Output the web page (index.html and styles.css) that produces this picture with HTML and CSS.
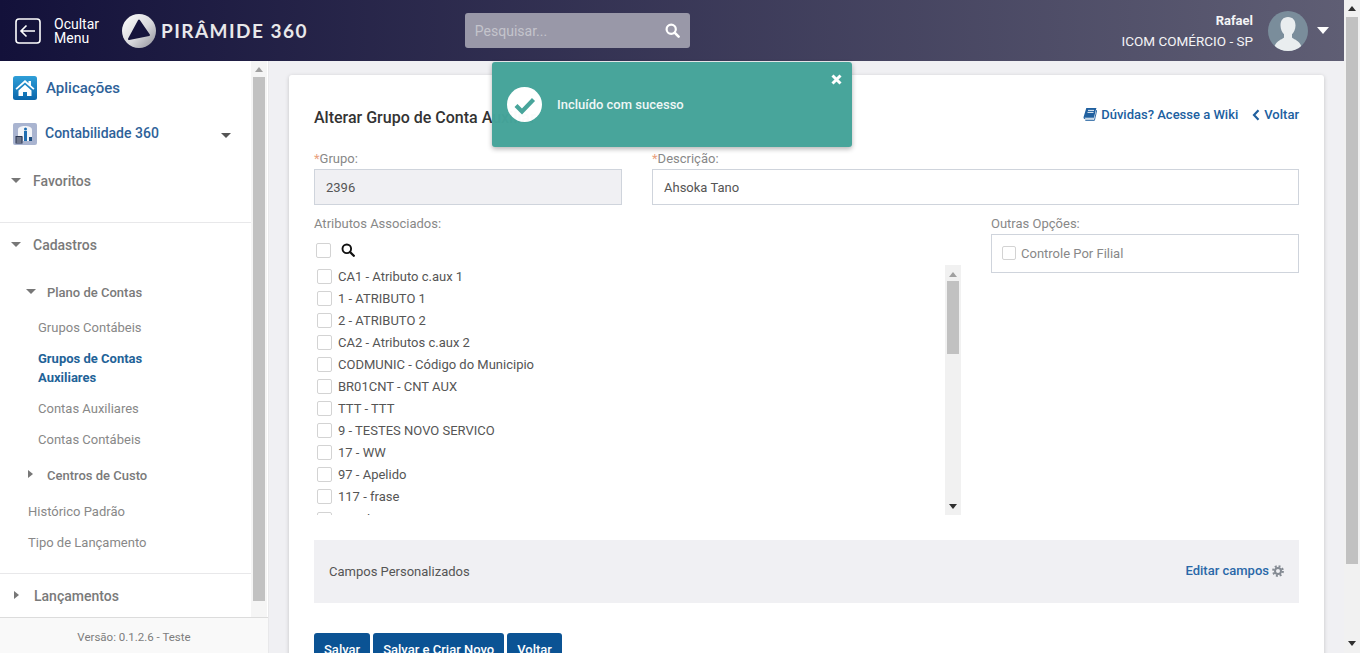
FILE: index.html
```html
<!DOCTYPE html>
<html lang="pt-BR">
<head>
<meta charset="utf-8">
<title>Alterar Grupo de Conta Auxiliar</title>
<link rel="stylesheet" href="styles.css">
</head>
<body>
<div class="window">
  <div class="page">
    <header class="topbar">
      <button class="hide-menu">
        <svg class="hide-icon" viewBox="0 0 26 26" width="26" height="26"><rect x="1" y="1" width="24" height="24" rx="3" fill="none" stroke="#fff" stroke-width="1.6"/><path d="M20 13H6M11.5 7.5 6 13l5.5 5.5" fill="none" stroke="#fff" stroke-width="1.6"/></svg>
        <span class="hide-text">Ocultar<br>Menu</span>
      </button>
      <div class="brand">
        <svg width="34" height="34" viewBox="0 0 34 34">
          <defs>
            <linearGradient id="ring" x1="0" y1="0" x2="1" y2="1"><stop offset="0" stop-color="#ffffff"/><stop offset=".55" stop-color="#d8d8dc"/><stop offset="1" stop-color="#8d8d96"/></linearGradient>
          </defs>
          <circle cx="17" cy="17" r="17" fill="url(#ring)"/>
          <path d="M17 6.5 7 25 27 21Z" fill="#16143c" stroke="#16143c" stroke-width="2" stroke-linejoin="round"/>
        </svg>
        <span class="brand-name">PIRÂMIDE 360</span>
      </div>
      <div class="search">
        <span class="search-text">Pesquisar...</span>
        <svg width="15" height="15" viewBox="0 0 15 15"><circle cx="6.2" cy="6.2" r="4.6" fill="none" stroke="#fff" stroke-width="2.2"/><path d="m9.6 9.6 4 4" stroke="#fff" stroke-width="2.6" stroke-linecap="round"/></svg>
      </div>
      <div class="user">
        <div class="user-text"><strong>Rafael</strong><span>ICOM COMÉRCIO - SP</span></div>
        <svg class="avatar" width="40" height="40" viewBox="0 0 40 40"><clipPath id="av"><circle cx="20" cy="20" r="20"/></clipPath><g clip-path="url(#av)"><rect width="40" height="40" fill="#7a8d9b"/><path d="M20 6c-5 0-7.500 3.500-7.500 8.500 0 4 1.800 7 3.500 8.800v3.200C14 29 6 29.500 6 40h28c0-10.500-8-11-10-13.500v-3.200c1.700-1.800 3.500-4.800 3.500-8.800C27.500 9.500 25 6 20 6Z" fill="#e9edef"/></g></svg>
        <span class="caret-white"></span>
      </div>
    </header>
    <div class="body">
      <aside class="sidebar">
        <div class="side-main">
          <nav class="nav">
            <a class="app app-first"><svg width="24" height="24" viewBox="0 0 24 24"><defs><linearGradient id="blue" x1="0" y1="0" x2="0" y2="1"><stop offset="0" stop-color="#2f9fd8"/><stop offset="1" stop-color="#0a66ab"/></linearGradient></defs><rect width="24" height="24" rx="2.500" fill="url(#blue)"/><path d="M12 4 2.500 12.500l1.200 1.300L12 6.500l8.300 7.300 1.200-1.300L18 9.400V5h-2.500v2.200Z" fill="#fff"/><path d="M5.500 14.500 12 8.700l6.500 5.800V20h-4.500v-4h-4v4H5.500Z" fill="#fff"/></svg><span class="app-name">Aplicações</span></a>
            <a class="app app-second"><svg width="24" height="22" viewBox="0 0 24 22"><rect width="24" height="22" rx="2" fill="#a9b4d0"/><path d="M5 14V7c0-3 3-4 7-4s7 1 7 4v11H10v-4Z" fill="#f2f4f8"/><rect x="2.500" y="13" width="7" height="7.500" fill="#2a3550"/><path d="M3.500 15h5M3.500 17h5M3.500 19h5" stroke="#d8dce6" stroke-width=".8"/><rect x="11" y="8" width="3" height="10" fill="#1f6db0"/><circle cx="12.500" cy="6" r="1.500" fill="#1f6db0"/><rect x="16" y="14" width="3" height="4" fill="#1f4f80"/></svg><span class="app-name small">Contabilidade 360</span><span class="caret caret-app"></span></a>
            <a class="group group-fav"><span class="caret"></span>Favoritos</a>
            <hr class="rule rule-a">
            <a class="group group-cad"><span class="caret"></span>Cadastros</a>
            <a class="sub sub-plano"><span class="caret"></span>Plano de Contas</a>
            <a class="leaf">Grupos Contábeis</a>
            <a class="leaf active">Grupos de Contas<br>Auxiliares</a>
            <a class="leaf">Contas Auxiliares</a>
            <a class="leaf">Contas Contábeis</a>
            <a class="sub sub-centros"><span class="caret-right"></span>Centros de Custo</a>
            <a class="leaf shallow first-shallow">Histórico Padrão</a>
            <a class="leaf shallow">Tipo de Lançamento</a>
            <hr class="rule rule-b">
            <a class="group group-lanc"><span class="caret-right"></span>Lançamentos</a>
          </nav>
          <div class="scrollbar side-scroll">
            <span class="arrow-up"></span>
            <span class="thumb"></span>
          </div>
        </div>
        <footer class="version">Versão: 0.1.2.6 - Teste</footer>
      </aside>
      <main class="content">
        <section class="card">
          <div class="card-head">
            <h1 class="title">Alterar Grupo de Conta Auxiliar</h1>
            <div class="head-links">
              <a class="link"><svg width="14" height="14" viewBox="0 0 14 14"><path d="M3.300 1H13.500l-.4 1-2.500 10.200H2.400C1 12.200.3 11.300.6 10Z" fill="#20609f"/><path d="M1.800 10.600c-.2.700.1 1.100.8 1.100h8.300l.2-.9H2.400Z" fill="#fff"/><path d="M5 3.400h6M4.500 5.400h6" stroke="#fff" stroke-width=".9"/><path d="M13.800 3 11.400 13.400H2.300" fill="none" stroke="#20609f" stroke-width=".9"/></svg>Dúvidas? Acesse a Wiki</a>
              <a class="link"><svg width="8" height="12" viewBox="0 0 8 12"><path d="M6.500 1.200 2 6l4.500 4.800" fill="none" stroke="#20609f" stroke-width="2.200"/></svg>Voltar</a>
            </div>
          </div>
          <div class="fields">
            <div class="field">
              <label class="label"><i>*</i>Grupo:</label>
              <div class="input readonly">2396</div>
            </div>
            <div class="field">
              <label class="label"><i>*</i>Descrição:</label>
              <div class="input">Ahsoka Tano</div>
            </div>
          </div>
          <div class="assoc">
            <div class="assoc-left">
              <label class="label">Atributos Associados:</label>
              <div class="list-tools">
                <span class="check"></span>
                <svg width="14" height="14" viewBox="0 0 14 14"><circle cx="5.800" cy="5.800" r="4.300" fill="none" stroke="#111" stroke-width="1.900"/><path d="m9 9 3.800 3.800" stroke="#111" stroke-width="2.300" stroke-linecap="round"/></svg>
              </div>
              <div class="list-box">
                <ul class="list">
                  <li><span class="check"></span>CA1 - Atributo c.aux 1</li>
                  <li><span class="check"></span>1 - ATRIBUTO 1</li>
                  <li><span class="check"></span>2 - ATRIBUTO 2</li>
                  <li><span class="check"></span>CA2 - Atributos c.aux 2</li>
                  <li><span class="check"></span>CODMUNIC - Código do Municipio</li>
                  <li><span class="check"></span>BR01CNT - CNT AUX</li>
                  <li><span class="check"></span>TTT - TTT</li>
                  <li><span class="check"></span>9 - TESTES NOVO SERVICO</li>
                  <li><span class="check"></span>17 - WW</li>
                  <li><span class="check"></span>97 - Apelido</li>
                  <li><span class="check"></span>117 - frase</li>
                  <li><span class="check"></span>18 - diego</li>
                </ul>
                <div class="scrollbar list-scroll">
                  <span class="arrow-up"></span>
                  <span class="thumb"></span>
                  <span class="arrow-down"></span>
                </div>
              </div>
            </div>
            <div class="assoc-right">
              <label class="label">Outras Opções:</label>
              <div class="options"><span class="check"></span>Controle Por Filial</div>
            </div>
          </div>
          <div class="custom">
            <span>Campos Personalizados</span>
            <a class="edit">Editar campos<svg width="12" height="12" viewBox="0 0 12 12"><circle cx="6" cy="6" r="4.800" fill="none" stroke="#858b93" stroke-width="2.200" stroke-dasharray="1.900 1.870"/><circle cx="6" cy="6" r="3" fill="none" stroke="#858b93" stroke-width="2"/></svg></a>
          </div>
          <div class="actions">
            <button class="btn">Salvar</button>
            <button class="btn">Salvar e Criar Novo</button>
            <button class="btn">Voltar</button>
          </div>
        </section>
      </main>
    </div>
  </div>
  <div class="scrollbar page-scroll">
    <span class="arrow-up"></span>
    <span class="thumb"></span>
    <span class="arrow-down"></span>
  </div>
</div>
<div class="toast">
  <svg width="35" height="35" viewBox="0 0 35 35"><circle cx="17.500" cy="17.500" r="17.500" fill="#fff"/><path d="m9 18.500 6 6L26.500 12.500" fill="none" stroke="#45a49a" stroke-width="4.200"/></svg>
  <span class="toast-text">Incluído com sucesso</span>
  <svg class="toast-close" width="11" height="11" viewBox="0 0 11 11"><path d="m1.500 1.500 8 8M9.500 1.500l-8 8" stroke="#fff" stroke-width="3"/></svg>
</div>
</body>
</html>
```
FILE: styles.css
```css
* { box-sizing: border-box; }
html, body { margin: 0; height: 653px; overflow: hidden; }
body { font-family: Roboto, "Liberation Sans", sans-serif; font-size: 13px; color: #444; background: #f0f0f3; }
a { text-decoration: none; }

.window { display: flex; height: 653px; }
.page { flex: 1; min-width: 0; display: flex; flex-direction: column; height: 653px; }

/* scrollbars */
.scrollbar { display: flex; flex-direction: column; align-items: center; background: #f1f1f1; flex: none; }
.thumb { display: block; background: #c1c1c1; }
.arrow-up { width: 0; height: 0; border: 4px solid transparent; border-top: 0; border-bottom: 5px solid #606060; }
.arrow-down { width: 0; height: 0; border: 4px solid transparent; border-bottom: 0; border-top: 5px solid #303030; margin-top: auto; }
.page-scroll { width: 16px; padding: 6px 0 7px; }
.page-scroll .arrow-up { margin-bottom: 6px; border-bottom-color: #303030; }
.page-scroll .thumb { width: 12px; height: 547px; }
.side-scroll { width: 16px; height: 556px; padding-top: 6px; margin-right: 1px; background: #f5f5f5; }
.side-scroll .arrow-up { border-bottom-color: #a0a0a0; margin-bottom: 5px; }
.side-scroll .thumb { width: 12px; height: 524px; }
.list-scroll { width: 16px; height: 250px; padding: 7px 0 6px; }
.list-scroll .arrow-up { border-bottom-color: #a0a0a0; margin-bottom: 4px; }
.list-scroll .thumb { width: 12px; height: 73px; }

/* topbar */
.topbar { height: 61px; flex: none; display: flex; align-items: center; background: linear-gradient(90deg, #13113a 0%, #5f5e74 100%); color: #fff; }
.hide-menu { display: flex; align-items: center; background: none; border: 0; padding: 0 0 0 15px; color: #fff; font: inherit; }
.hide-icon { display: block; }
.hide-text { margin-left: 13px; width: 68px; text-align: left; font-size: 14px; line-height: 14px; }
.brand { display: flex; align-items: center; margin-left: 0; }
.brand-name { margin-left: 5px; font-family: Lato, sans-serif; font-size: 19px; font-weight: 700; letter-spacing: 1.450px; color: #e8e8ea; white-space: nowrap; }
.search { margin-left: 157px; width: 225px; height: 35px; border-radius: 3px; background: #9998a8; display: flex; align-items: center; justify-content: space-between; padding: 0 10px; }
.search-text { color: #c4c4cc; font-size: 14px; }
.user { margin-left: auto; display: flex; align-items: center; }
.user-text { display: flex; flex-direction: column; align-items: flex-end; line-height: 20px; font-size: 13.500px; color: #f4f4f6; }
.user-text strong { font-weight: 700; font-size: 13px; }
.avatar { margin-left: 15px; }
.caret-white { width: 0; height: 0; margin: 0 15px 0 9px; border: 6px solid transparent; border-bottom: 0; border-top: 7px solid #fff; }

.body { flex: 1; display: flex; min-height: 0; }

/* sidebar */
.sidebar { width: 269px; flex: none; display: flex; flex-direction: column; background: #fff; border-right: 1px solid #e8e8ea; }
.side-main { display: flex; height: 556px; flex: none; overflow: hidden; }
.nav { flex: 1; min-width: 0; display: flex; flex-direction: column; }
.app { display: flex; align-items: center; color: #2e6299; font-weight: 500; margin-left: 13px; }
.app-first { margin-top: 15px; height: 24px; }
.app-second { margin-top: 23px; height: 22px; }
.app-name { margin-left: 9px; font-size: 15px; }
.app-name.small { margin-left: 8px; margin-top: -3px; font-size: 14px; }
.caret { display: inline-block; width: 0; height: 0; border: 5px solid transparent; border-bottom: 0; border-top: 5px solid #777; }
.caret-right { display: inline-block; width: 0; height: 0; border: 4px solid transparent; border-right: 0; border-left: 5px solid #777; }
.caret-app { margin-left: 62px; margin-top: 2px; border-top-color: #555; }
.group { display: flex; align-items: center; height: 20px; padding-left: 11px; font-size: 14px; font-weight: 500; color: #7a7a7a; }
.group .caret { margin-right: 12px; margin-top: -2px; }
.group .caret-right { margin: -2px 15px 0 3px; }
.group-fav { margin-top: 26px; }
.group-cad { margin-top: 12px; }
.group-lanc { margin-top: 12px; }
.rule { width: 100%; height: 1px; border: 0; margin: 0; background: #e8e8ea; flex: none; }
.rule-a { margin-top: 31px; }
.rule-b { margin-top: 21px; }
.sub { display: flex; align-items: center; height: 20px; padding-left: 26px; font-size: 13px; font-weight: 500; color: #7a7a7a; }
.sub .caret { margin-right: 11px; margin-top: -2px; }
.sub .caret-right { margin: -2px 14px 0 2px; }
.sub-plano { margin-top: 27px; }
.sub-centros { margin-top: 16px; }
.leaf { display: block; margin-top: 12px; padding-left: 38px; font-size: 13px; line-height: 19px; color: #888; }
.sub-plano + .leaf { margin-top: 16px; }
.leaf.active { color: #1f6398; font-weight: 700; }
.leaf.shallow { padding-left: 28px; }
.leaf.first-shallow { margin-top: 17px; }
.version { flex: 1; border-top: 1px solid #dcdcdc; background: #f9f9f9; text-align: center; font-size: 11.500px; color: #7d7d7d; padding-top: 12px; }

/* content */
.content { flex: 1; min-width: 0; padding: 14px 20px 0; overflow: hidden; }
.card { background: #fff; border-radius: 3px; box-shadow: 0 1px 4px rgba(0,0,0,.18); padding: 0 25px; height: 640px; }
.card-head { display: flex; justify-content: space-between; height: 74px; }
.title { margin: 33px 0 0; font-size: 16px; line-height: 19px; font-weight: 500; color: #333; }
.head-links { display: flex; gap: 14px; margin-top: 31px; }
.link { display: flex; align-items: flex-start; gap: 4px; color: #20609f; font-weight: 500; line-height: 17px; }
.link svg { margin-top: 1px; }
.link + .link svg { margin-top: 3px; }
.fields { display: grid; grid-template-columns: 308px 647px; column-gap: 30px; }
.label { display: block; color: #888; line-height: 20px; height: 20px; }
.label i { font-style: normal; color: #e9a17e; }
.input { height: 36px; border: 1px solid #cfd4dc; padding-left: 11px; line-height: 35px; color: #555; }
.input.readonly { background: #f0f0f3; }
.assoc { display: flex; justify-content: space-between; margin-top: 9px; }
.assoc-left { width: 647px; }
.assoc-right { width: 308px; }
.list-tools { display: flex; align-items: center; gap: 10px; height: 20px; margin: 6px 0 0 2px; }
.check { display: inline-block; flex: none; width: 15px; height: 15px; border: 1px solid #d3d3d3; border-radius: 2px; background: #fff; }
.list-box { display: flex; justify-content: space-between; height: 250px; margin-top: 5px; overflow: hidden; }
.list { list-style: none; margin: 0; padding: 0; }
.list li { display: flex; align-items: center; height: 22.100px; padding-left: 3px; color: #555; white-space: nowrap; }
.list .check { margin-right: 6px; }
.options { display: flex; align-items: center; height: 39px; border: 1px solid #cfd4dc; padding-left: 10px; color: #888; }
.options .check { margin-right: 5px; width: 14px; height: 14px; margin-top: -1px; }
.custom { display: flex; justify-content: space-between; align-items: center; height: 63px; margin-top: 25px; padding: 0 15px; background: #f0f0f3; color: #555; }
.edit { display: flex; align-items: center; gap: 3px; color: #2a68a8; font-weight: 500; margin-top: -2px; }
.actions { display: flex; gap: 3px; margin-top: 30px; }
.btn { height: 32px; padding: 0 10px; border: 0; border-radius: 3px; background: #0b5394; color: #fff; font: 500 13px Roboto, sans-serif; }

/* toast */
.toast { position: absolute; left: 492px; top: 62px; width: 360px; height: 85px; display: flex; align-items: center; padding: 0 15px; background: #45a49a; opacity: .98; border-radius: 3px; box-shadow: 0 2px 5px rgba(0,0,0,.3); color: #fff; }
.toast-text { margin-left: 15px; font-size: 13px; font-weight: 500; color: #eef7f6; }
.toast-close { position: absolute; right: 10px; top: 12px; }
```
